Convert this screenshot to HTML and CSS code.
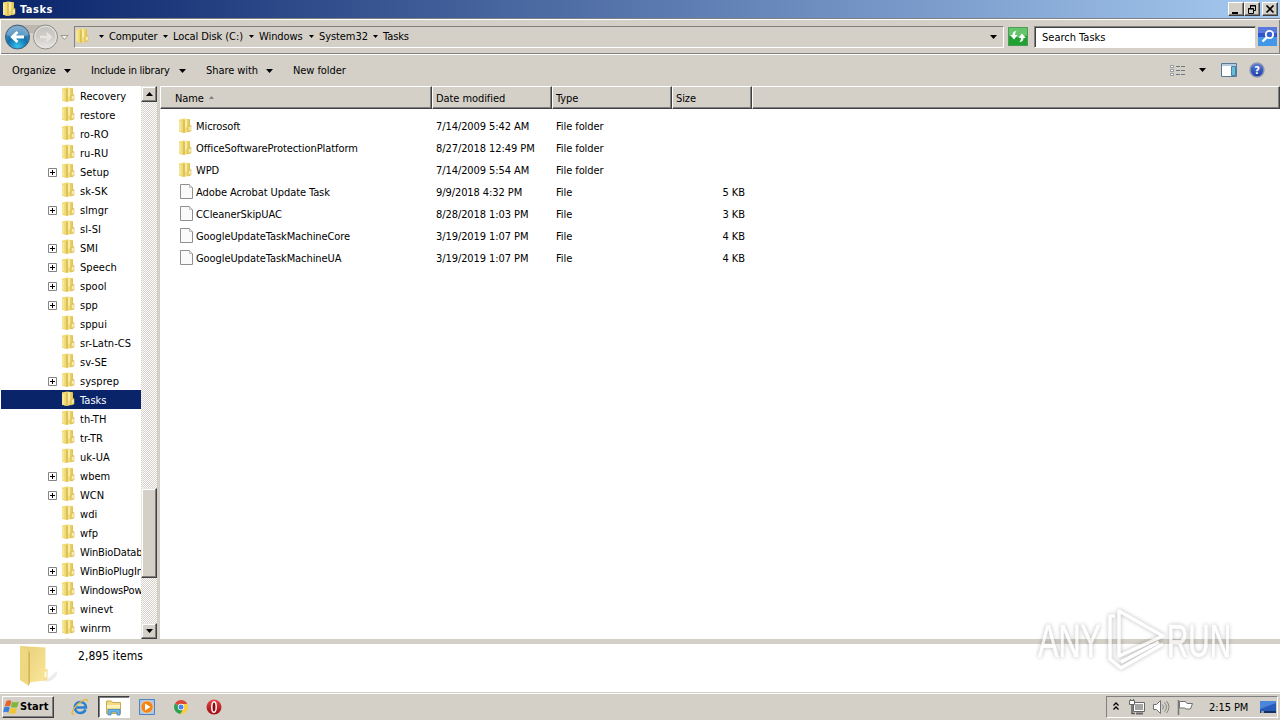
FILE: index.html
```html
<!DOCTYPE html>
<html lang="en">
<head>
    <meta charset="UTF-8">
    <meta name="viewport" content="width=device-width, initial-scale=1.0">
    <title>Tasks</title>
    <link rel="stylesheet" href="styles.css">
</head>
<body>
    <!-- Shared icons -->
    <svg class="icon-defs" width="0" height="0">
        <defs>
            <linearGradient id="gold" x1="0" x2="1" y1="0" y2="0">
                <stop offset="0" stop-color="#fbeea0"/>
                <stop offset="0.45" stop-color="#e9cf5c"/>
                <stop offset="0.55" stop-color="#f6e388"/>
                <stop offset="1" stop-color="#dfc04a"/>
            </linearGradient>
            <linearGradient id="gold-big" x1="0" x2="1" y1="0" y2="1">
                <stop offset="0" stop-color="#e6cd78"/>
                <stop offset="1" stop-color="#fbe79a"/>
            </linearGradient>
            <radialGradient id="blue-ball" cx="0.5" cy="0.9" r="0.85">
                <stop offset="0" stop-color="#35c3ee"/>
                <stop offset="0.5" stop-color="#1272ad"/>
                <stop offset="1" stop-color="#5f93be"/>
            </radialGradient>
            <linearGradient id="gray-ball" x1="0" x2="0" y1="0" y2="1">
                <stop offset="0" stop-color="#c3c1be"/>
                <stop offset="0.5" stop-color="#cfccc8"/>
                <stop offset="1" stop-color="#e9e7e4"/>
            </linearGradient>
            <linearGradient id="help-ball" x1="0" x2="0" y1="0" y2="1">
                <stop offset="0" stop-color="#5c7fd6"/>
                <stop offset="1" stop-color="#1a3aa6"/>
            </linearGradient>
            <linearGradient id="red-ball" x1="0" x2="0" y1="0" y2="1">
                <stop offset="0" stop-color="#e84848"/>
                <stop offset="1" stop-color="#a00810"/>
            </linearGradient>
        </defs>
        <symbol id="folder" viewBox="0 0 16 16">
            <path d="M1 1.500l5-1 6 .8v12.200l-6 1.400-5-1.200z" fill="url(#gold)"/>
            <path d="M1 1.500l4.500.7v12.500l-4.500-1z" fill="#f1db78"/>
            <path d="M2 3v10" stroke="#fbf2b8"/>
            <path d="M6 2v12.500" stroke="#c9aa45"/>
            <path d="M8 1.500v8" stroke="#fff6c0" stroke-width="1.200"/>
            <path d="M10 8.500l3-1v5.500l-3 1z" fill="#efdb7c" stroke="#d3b64c" stroke-width=".6"/>
            <path d="M12 9v3" stroke="#fffbe5" stroke-width="1"/>
        </symbol>
        <symbol id="file" viewBox="0 0 16 16">
            <path d="M2.500.5h9l3 3v11h-12z" fill="#fafafa" stroke="#8f8f8f"/>
            <path d="M11.500.5v3h3" fill="#e4e4e4" stroke="#b5b5b5" stroke-width=".8"/>
        </symbol>
        <symbol id="plus" viewBox="0 0 9 9">
            <path d="M.5.5h8v8h-8z" fill="#fff" stroke="#848484"/>
            <path d="M2 4.500h5M4.500 2v5" stroke="#000"/>
        </symbol>
        <symbol id="down" viewBox="0 0 7 4">
            <path d="M0 0h7L3.500 4z" fill="#000"/>
        </symbol>
    </svg>

    <header class="title-bar">
        <svg class="title-icon"><use href="#folder"/></svg>
        <span class="title">Tasks</span>
        <div class="window-buttons">
            <button class="window-button"><svg width="10" height="9"><path d="M1 7h6v2H1z"/></svg></button>
            <button class="window-button"><svg width="10" height="9"><path d="M3.500 3V.5h5v5h-2M3 1h6" fill="none" stroke="#000"/><path d="M1.500 3.500h5v5h-5zM1 4h6" fill="#d4d0c8" stroke="#000"/></svg></button>
            <button class="window-button close"><svg width="10" height="9"><path d="M1.500.5l7 7M8.500.5l-7 7" stroke="#000" stroke-width="1.600"/></svg></button>
        </div>
    </header>

    <nav class="address-row">
        <svg class="travel" width="72" height="30">
            <path d="M14 3h34v8H14z" fill="#bcb8b0"/>
            <circle cx="17.500" cy="15" r="12" fill="url(#blue-ball)" stroke="#465f78"/>
            <path d="M6.500 13c1-6 6-9 11-9s10 3 11 9c-7 2.500-15 2.500-22 0z" fill="#fff" opacity=".25"/>
            <path d="M24 15H13M17.500 10l-5.200 5 5.200 5" fill="none" stroke="#fff" stroke-width="2.800"/>
            <circle cx="45.500" cy="15" r="12" fill="url(#gray-ball)" stroke="#908e8b"/>
            <circle cx="45.500" cy="15" r="10.700" fill="none" stroke="#e9e7e3"/>
            <path d="M40 15h10M46.500 11l4.200 4-4.200 4" fill="none" stroke="#e8e5e1" stroke-width="2.400"/>
            <path d="M61 13.500h7l-3.500 4z" fill="#f5f3ef" stroke="#8a8880" stroke-width=".8"/>
        </svg>
        <div class="address">
            <svg class="icon"><use href="#folder"/></svg>
            <ul class="crumbs">
                <li><svg class="arrow"><use href="#down"/></svg><span style="width:47px">Computer</span></li>
                <li><svg class="arrow"><use href="#down"/></svg><span style="width:69px">Local Disk (C:)</span></li>
                <li><svg class="arrow"><use href="#down"/></svg><span style="width:43px">Windows</span></li>
                <li><svg class="arrow"><use href="#down"/></svg><span style="width:47px">System32</span></li>
                <li><svg class="arrow"><use href="#down"/></svg><span>Tasks</span></li>
            </ul>
            <svg class="history"><use href="#down"/></svg>
        </div>
        <button class="refresh"><svg width="20" height="19">
            <path d="M0 0h20v19H0z" fill="#22a032"/>
            <path d="M0 0h20v8c-7 3-14 3-20 0z" fill="#65c56c"/>
            <path d="M.5.5h19v18H.5z" fill="none" stroke="#4d9a55"/>
            <path d="M8.500 4c-2.500 0-4 1.500-4 4H2.200L6 12.500 9.500 8H7c0-1.500.5-2.500 1.500-4zM11.500 15c2.500 0 4-1.500 4-4h2.300L14 6.500 10.500 11H13c0 1.500-.5 2.500-1.500 4z" fill="#fff"/>
        </svg></button>
        <div class="search">Search Tasks</div>
        <button class="search-go"><svg width="19" height="19">
            <path d="M0 0h19v19H0z" fill="#2f55cd"/>
            <path d="M0 10h19v9H0z" fill="#4298e6"/>
            <path d="M0 0h19v6H0z" fill="#5b79da"/>
            <circle cx="11.500" cy="7.500" r="3.700" fill="#3a62cf" stroke="#fff" stroke-width="1.800"/>
            <path d="M8.800 10.300L4.500 14.500" stroke="#fff" stroke-width="2.400"/>
        </svg></button>
    </nav>

    <div class="toolbar">
        <span class="command organize">Organize <svg class="arrow"><use href="#down"/></svg></span>
        <span class="command include">Include in library <svg class="arrow"><use href="#down"/></svg></span>
        <span class="command share">Share with <svg class="arrow"><use href="#down"/></svg></span>
        <span class="command">New folder</span>
        <div class="view-tools">
            <svg width="16" height="13">
                <path d="M.5 1.500h3v2h-3zM.5 5.500h3v2h-3zM.5 9.500h3v2h-3z" fill="#fff" stroke="#7d8792" stroke-width=".8"/>
                <path d="M6 2.500h4M11 2.500h4M6 6.500h4M11 6.500h4M6 10.500h4M11 10.500h4" stroke="#71767e"/>
            </svg>
            <svg class="arrow"><use href="#down"/></svg>
            <svg width="16" height="14">
                <path d="M.5.500h15v13H.5z" fill="#fff" stroke="#56799b"/>
                <path d="M1 1h14v2H1z" fill="#b4cbe0"/>
                <path d="M10.500 3.500h4v9h-4z" fill="#68bddd" stroke="#457fa3"/>
            </svg>
            <svg width="16" height="16">
                <circle cx="8" cy="8" r="7" fill="url(#help-ball)" stroke="#8f98b4" stroke-width="1.400"/>
                <text x="8" y="12" class="help-mark">?</text>
            </svg>
        </div>
    </div>

    <main class="explorer">
        <ul class="tree">
            <li><svg class="icon"><use href="#folder"/></svg>Recovery</li>
            <li><svg class="icon"><use href="#folder"/></svg>restore</li>
            <li><svg class="icon"><use href="#folder"/></svg>ro-RO</li>
            <li><svg class="icon"><use href="#folder"/></svg>ru-RU</li>
            <li class="parent"><svg class="plus"><use href="#plus"/></svg><svg class="icon"><use href="#folder"/></svg>Setup</li>
            <li><svg class="icon"><use href="#folder"/></svg>sk-SK</li>
            <li class="parent"><svg class="plus"><use href="#plus"/></svg><svg class="icon"><use href="#folder"/></svg>slmgr</li>
            <li><svg class="icon"><use href="#folder"/></svg>sl-SI</li>
            <li class="parent"><svg class="plus"><use href="#plus"/></svg><svg class="icon"><use href="#folder"/></svg>SMI</li>
            <li class="parent"><svg class="plus"><use href="#plus"/></svg><svg class="icon"><use href="#folder"/></svg>Speech</li>
            <li class="parent"><svg class="plus"><use href="#plus"/></svg><svg class="icon"><use href="#folder"/></svg>spool</li>
            <li class="parent"><svg class="plus"><use href="#plus"/></svg><svg class="icon"><use href="#folder"/></svg>spp</li>
            <li><svg class="icon"><use href="#folder"/></svg>sppui</li>
            <li><svg class="icon"><use href="#folder"/></svg>sr-Latn-CS</li>
            <li><svg class="icon"><use href="#folder"/></svg>sv-SE</li>
            <li class="parent"><svg class="plus"><use href="#plus"/></svg><svg class="icon"><use href="#folder"/></svg>sysprep</li>
            <li class="selected"><svg class="icon"><use href="#folder"/></svg>Tasks</li>
            <li><svg class="icon"><use href="#folder"/></svg>th-TH</li>
            <li><svg class="icon"><use href="#folder"/></svg>tr-TR</li>
            <li><svg class="icon"><use href="#folder"/></svg>uk-UA</li>
            <li class="parent"><svg class="plus"><use href="#plus"/></svg><svg class="icon"><use href="#folder"/></svg>wbem</li>
            <li class="parent"><svg class="plus"><use href="#plus"/></svg><svg class="icon"><use href="#folder"/></svg>WCN</li>
            <li><svg class="icon"><use href="#folder"/></svg>wdi</li>
            <li><svg class="icon"><use href="#folder"/></svg>wfp</li>
            <li class="long"><svg class="icon"><use href="#folder"/></svg>WinBioDatab</li>
            <li class="parent long"><svg class="plus"><use href="#plus"/></svg><svg class="icon"><use href="#folder"/></svg>WinBioPlugIn</li>
            <li class="parent long"><svg class="plus"><use href="#plus"/></svg><svg class="icon"><use href="#folder"/></svg>WindowsPow</li>
            <li class="parent"><svg class="plus"><use href="#plus"/></svg><svg class="icon"><use href="#folder"/></svg>winevt</li>
            <li class="parent"><svg class="plus"><use href="#plus"/></svg><svg class="icon"><use href="#folder"/></svg>winrm</li>
            <li><svg class="icon"><use href="#folder"/></svg></li>
        </ul>
        <div class="scrollbar">
            <button class="scroll-button"><svg width="7" height="4"><path d="M0 4h7L3.500 0z"/></svg></button>
            <div class="scroll-track"><div class="scroll-thumb"></div></div>
            <button class="scroll-button"><svg width="7" height="4"><path d="M0 0h7L3.500 4z"/></svg></button>
        </div>
        <section class="files">
            <div class="file-row file-head">
                <span class="name">Name <svg width="5" height="3"><path d="M0 3h5L2.500 0z" fill="#808080"/></svg></span>
                <span>Date modified</span>
                <span>Type</span>
                <span>Size</span>
                <span></span>
            </div>
            <div class="file-list">
                <div class="file-row"><span class="name"><svg class="icon"><use href="#folder"/></svg>Microsoft</span><span>7/14/2009 5:42 AM</span><span>File folder</span><span class="size"></span></div>
                <div class="file-row"><span class="name"><svg class="icon"><use href="#folder"/></svg>OfficeSoftwareProtectionPlatform</span><span>8/27/2018 12:49 PM</span><span>File folder</span><span class="size"></span></div>
                <div class="file-row"><span class="name"><svg class="icon"><use href="#folder"/></svg>WPD</span><span>7/14/2009 5:54 AM</span><span>File folder</span><span class="size"></span></div>
                <div class="file-row"><span class="name"><svg class="icon"><use href="#file"/></svg>Adobe Acrobat Update Task</span><span>9/9/2018 4:32 PM</span><span>File</span><span class="size">5 KB</span></div>
                <div class="file-row"><span class="name"><svg class="icon"><use href="#file"/></svg>CCleanerSkipUAC</span><span>8/28/2018 1:03 PM</span><span>File</span><span class="size">3 KB</span></div>
                <div class="file-row"><span class="name"><svg class="icon"><use href="#file"/></svg>GoogleUpdateTaskMachineCore</span><span>3/19/2019 1:07 PM</span><span>File</span><span class="size">4 KB</span></div>
                <div class="file-row"><span class="name"><svg class="icon"><use href="#file"/></svg>GoogleUpdateTaskMachineUA</span><span>3/19/2019 1:07 PM</span><span>File</span><span class="size">4 KB</span></div>
            </div>
        </section>
    </main>

    <footer class="details">
        <svg width="42" height="44">
            <path d="M28 36l11-9c1 5-4 10-11 11z" fill="#d8dbde" opacity=".5"/>
            <path d="M2 2l25.500 1.500v33l-17 2z" fill="url(#gold-big)"/>
            <path d="M2 1.500l9 5V42L2 36z" fill="#eed781"/>
            <path d="M10.500 6.500V42l1.300-3V9z" fill="#cda94a"/>
            <path d="M26 27l3.500-2.500V35L26 37.500z" fill="#f2dc8a"/>
            <path d="M27.500 27.500v6" stroke="#fffdf0" stroke-width="2"/>
        </svg>
        <span>2,895 items</span>
    </footer>

    <div class="taskbar">
        <button class="start">
            <svg width="17" height="16">
                <path d="M3.500 2c2-1 3.500-.8 5 .2L7 7.600c-1.500-1-3.500-1-5.500-.2z" fill="#e8622c"/>
                <path d="M9.200 2.700c2 .9 4 .9 6.600-.2l-1.500 5.400c-2 1-4.500.9-6.500 0z" fill="#7db83c"/>
                <path d="M1.300 8.200c2-.8 4-.8 5.500.2l-1.500 5.300c-1.500-1-3.300-1.200-5.300-.2z" fill="#3c7fd6"/>
                <path d="M7.600 8.800c2 .9 4 .9 6.500-.1l-1.500 5.300c-2 1.200-4.600 1-6.500 0z" fill="#f4c430"/>
            </svg>
            Start
        </button>
        <div class="launchers">
            <div class="launcher">
                <svg width="18" height="18">
                    <path d="M14.500 11.500c-1 2.300-2.900 3.500-5.200 3.500a5.500 5.500 0 1 1 5.600-5.500H5" fill="none" stroke="#2a7fd0" stroke-width="2.700"/>
                    <path d="M3.500 15.500C-1 18 1 12 6 7s11-7.500 10.500-3.500" fill="none" stroke="#e0bb38" stroke-width="1.300"/>
                </svg>
            </div>
            <div class="launcher active">
                <svg width="18" height="17">
                    <path d="M1.500 2h5l1 1.500h8v11h-14z" fill="#f1da83" stroke="#c9a94f"/>
                    <path d="M2 6h13v3H2z" fill="#fff3b8"/>
                    <path d="M3 16v-5.500h12V16h-3v-3H6v3z" fill="#6bb5e8" stroke="#3e87c4" stroke-width=".8"/>
                </svg>
            </div>
            <div class="launcher">
                <svg width="16" height="16">
                    <path d="M.5.500h15v15H.5z" fill="#a9c9ea" stroke="#4985c5"/>
                    <circle cx="8" cy="8" r="6.200" fill="#f38415" stroke="#fae3bd" stroke-width=".7"/>
                    <path d="M6 4.500v7L11.500 8z" fill="#fff"/>
                </svg>
            </div>
            <div class="launcher">
                <svg width="14" height="14">
                    <path d="M7 7L1 3.500A7 7 0 0 1 13.100 3.600z" fill="#de4537"/>
                    <path d="M7 7h-.2L1 3.500A7 7 0 0 0 6.500 14L9.500 8.500z" fill="#2fa14f"/>
                    <path d="M7 4h6.300A7 7 0 0 1 6.500 14L9.700 8.500z" fill="#fbcd3a"/>
                    <circle cx="7" cy="7" r="3.200" fill="#fff"/>
                    <circle cx="7" cy="7" r="2.500" fill="#4a83e8"/>
                </svg>
            </div>
            <div class="launcher">
                <svg width="16" height="16">
                    <circle cx="8" cy="8" r="7.500" fill="url(#red-ball)"/>
                    <ellipse cx="8" cy="8" rx="2.200" ry="5.300" fill="#8e0b10" stroke="#fff" stroke-width="1.500"/>
                </svg>
            </div>
        </div>
        <div class="tray">
            <svg class="chevrons" width="6" height="8"><path d="M.5 3.500L3 1l2.500 2.500M.5 7.500L3 5l2.500 2.500" fill="none" stroke="#000" stroke-width="1.300"/></svg>
            <svg class="network" width="17" height="16">
                <path d="M4.500 3.500h11v9h-11z" fill="#fff" stroke="#666"/>
                <path d="M6 5h8v6H6z" fill="#a4a4a4"/>
                <path d="M7 14.500h7" stroke="#666" stroke-width="2"/>
                <path d="M.5 1.500h5v4h-5zM1.500 0v2M4.500 0v2" fill="#fff" stroke="#666"/>
                <path d="M3 6v8.500h3" fill="none" stroke="#555" stroke-width="1.400"/>
            </svg>
            <svg class="volume" width="17" height="14">
                <path d="M.5 4.500h3l4-4v13l-4-4h-3z" fill="#fff" stroke="#707070"/>
                <path d="M9.500 4.500q2 2.500 0 5M11.500 2.500q4 4.500 0 9M13.500 1q5 6 0 12" fill="none" stroke="#858585"/>
            </svg>
            <svg class="flag" width="17" height="15">
                <path d="M1.500 0v15" stroke="#777" stroke-width="1.500"/>
                <path d="M2.500 1.500h6l1.500 2h5.500l-2 5.500H9L7.500 8h-5z" fill="#fff" stroke="#707070"/>
            </svg>
            <span class="clock">2:15 PM</span>
            <svg width="16" height="13">
                <path d="M0 0h16v10H0z" fill="#285cba"/>
                <path d="M0 0h16v2L0 8z" fill="#4c86db"/>
                <path d="M0 10h16v2H0z" fill="#16305f"/>
                <path d="M1 11h3" stroke="#fff"/>
            </svg>
        </div>
    </div>

    <!-- Watermark over the window -->
    <svg class="watermark" width="204" height="76">
        <text x="7" y="55" textLength="63" lengthAdjust="spacingAndGlyphs">ANY</text>
        <g class="watermark-play">
            <path d="M88 9v45l44-20z"/>
            <path d="M84 14h-5v43l11 9 42-24"/>
            <path d="M90 60l38-20"/>
        </g>
        <text x="136" y="55" textLength="64" lengthAdjust="spacingAndGlyphs">RUN</text>
    </svg>
</body>
</html>
```
FILE: styles.css
```css
* {
    box-sizing: border-box;
}

body {
    margin: 0;
    width: 1280px;
    height: 720px;
    overflow: hidden;
    display: flex;
    flex-direction: column;
    background: #d4d0c8;
    color: #000;
    font-family: "DejaVu Sans Condensed", "DejaVu Sans", sans-serif;
    font-stretch: condensed;
    font-size: 11px;
    letter-spacing: -0.08px;
    line-height: 14px;
    white-space: nowrap;
}

ul {
    list-style: none;
    margin: 0;
    padding: 0;
}

button {
    padding: 0;
    border: none;
    font: inherit;
    color: inherit;
    background: #d4d0c8;
}

svg {
    display: block;
    flex: none;
}

.icon-defs {
    position: absolute;
}

.icon {
    width: 16px;
    height: 16px;
}

.arrow {
    width: 7px;
    height: 4px;
}

/* Title bar */
.title-bar {
    height: 18px;
    display: flex;
    align-items: center;
    padding: 0 2px 0 2px;
    background: linear-gradient(to right, #0a246a, #a6caf0);
    color: #fff;
}

.title-icon {
    width: 16px;
    height: 16px;
}

.title {
    margin-left: 2px;
    padding-top: 1px;
    flex: 1;
    font-weight: bold;
    letter-spacing: 0.5px;
}

.window-buttons {
    display: flex;
}

.window-button {
    width: 16px;
    height: 14px;
    display: flex;
    align-items: center;
    justify-content: center;
    border: 1px solid;
    border-color: #fff #404040 #404040 #fff;
    box-shadow: inset -1px -1px #808080;
}

.close {
    margin-left: 2px;
}

/* Address row */
.address-row {
    height: 37px;
    display: flex;
    align-items: center;
    padding: 0 2px 0 0;
    border-top: 1px solid #808080;
    border-bottom: 1px solid #fff;
    box-shadow: inset 1px 1px #fff, inset -1px -1px #808080;
}

.address {
    width: 930px;
    height: 22px;
    margin-left: 2px;
    display: flex;
    align-items: center;
    border: 1px solid;
    border-color: #808080 #fff #fff #808080;
}

.address .icon {
    margin-top: -2px;
}

.crumbs {
    display: flex;
    flex: 1;
    margin-left: 8px;
}

.crumbs li {
    display: flex;
    align-items: center;
    margin-right: 7px;
}

.crumbs .arrow {
    width: 5px;
    height: 3px;
    margin-right: 5px;
}

.history {
    width: 7px;
    height: 4px;
    margin-right: 6px;
}

.refresh {
    margin-left: 4px;
}

.search {
    width: 222px;
    height: 22px;
    margin: 0 2px 0 6px;
    padding: 4px 7px;
    background: #fff;
    border: 1px solid;
    border-color: #808080 #d4d0c8 #fff #808080;
    box-shadow: inset 1px 1px #404040;
    letter-spacing: 0;
}

/* Command bar */
.toolbar {
    height: 31px;
    display: flex;
    align-items: center;
    padding: 0 15px 0 12px;
}

.command {
    display: flex;
    align-items: center;
    justify-content: space-between;
}

.organize {
    width: 59px;
    margin-right: 20px;
}

.include {
    width: 95px;
    margin-right: 20px;
    letter-spacing: -0.25px;
}

.share {
    width: 67px;
    margin-right: 20px;
}

.view-tools {
    margin: -1px 0 0 auto;
    display: flex;
    align-items: center;
}

.view-tools .arrow {
    margin: 0 15px 0 13px;
}

.view-tools svg:last-child {
    margin-left: 12px;
}

.help-mark {
    fill: #fff;
    font-weight: bold;
    font-size: 11px;
    text-anchor: middle;
}

/* Tree and file list */
.explorer {
    height: 553px;
    display: flex;
    overflow: hidden;
}

.tree {
    width: 141px;
    padding-left: 1px;
    background: #fff;
    overflow: hidden;
}

.tree li {
    height: 19px;
    display: flex;
    align-items: center;
    padding: 2px 0 0 60px;
    letter-spacing: 0.05px;
}

.tree .parent {
    padding-left: 47px;
}

.tree .long {
    letter-spacing: -0.15px;
}

.tree .icon {
    margin: -3px 3px 0 0;
}

.plus {
    width: 9px;
    height: 9px;
    margin: -1px 4px 0 0;
}

.tree .selected {
    background: #0a246a;
    color: #fff;
}

.scrollbar {
    width: 16px;
    display: flex;
    flex-direction: column;
}

.scroll-button {
    height: 16px;
    display: flex;
    align-items: center;
    justify-content: center;
}

.scroll-button,
.scroll-thumb {
    border: 1px solid;
    border-color: #e8e6e0 #404040 #404040 #e8e6e0;
    box-shadow: inset -1px -1px #808080, inset 1px 1px #fff;
    background: #d4d0c8;
}

.scroll-track {
    flex: 1;
    padding-top: 386px;
    background: repeating-conic-gradient(#fff 0 25%, #d4d0c8 0 50%) 0 0 / 2px 2px;
}

.scroll-thumb {
    height: 90px;
}

.files {
    flex: 1;
    margin-left: 3px;
    background: #fff;
}

.file-row {
    height: 22px;
    display: grid;
    grid-template-columns: 272px 120px 120px 80px 1fr;
    align-items: center;
}

.file-row span {
    padding-left: 4px;
}

.file-row .name {
    display: flex;
    align-items: center;
    padding-left: 18px;
}

.file-row .icon {
    margin: -3px 2px 0 0;
}

.file-row .size {
    padding-right: 7px;
    text-align: right;
}

.file-head {
    height: 23px;
    background: #d4d0c8;
}

.file-head span {
    height: 23px;
    padding: 5px 0 0 3px;
    border: 1px solid;
    border-color: #fff #404040 #404040 #fff;
    box-shadow: inset -1px -1px #808080;
}

.file-head .name {
    padding: 2px 0 0 14px;
    gap: 5px;
}

.file-head svg {
    margin-top: -3px;
}

.file-list {
    padding-top: 7px;
}

/* Details pane */
.details {
    height: 53px;
    display: flex;
    padding-left: 18px;
    background: #fff;
    border-top: 5px solid #d4d0c8;
    font-size: 12px;
    letter-spacing: 0.05px;
}

.details span {
    margin: 5px 0 0 18px;
}

/* Taskbar */
.taskbar {
    height: 28px;
    display: flex;
    align-items: center;
    padding: 1px 2px 0;
    border-top: 1px solid #d4d0c8;
    box-shadow: inset 0 1px #fff;
}

.start {
    width: 52px;
    height: 22px;
    display: flex;
    align-items: center;
    font-weight: bold;
    letter-spacing: 0.1px;
    border: 1px solid;
    border-color: #fff #404040 #404040 #fff;
    box-shadow: inset -1px -1px #808080;
}

.launchers {
    flex: 1;
    display: flex;
    margin-left: 10px;
    gap: 1.5px;
}

.launcher {
    width: 32px;
    height: 22px;
    display: flex;
    align-items: center;
    justify-content: center;
}

.active {
    background: #fff;
    border: 1px solid;
    border-color: #404040 #fff #fff #404040;
    box-shadow: inset 1px 1px #808080;
}

.tray {
    width: 172px;
    height: 22px;
    display: flex;
    align-items: center;
    padding-left: 6px;
    border: 1px solid;
    border-color: #808080 #fff #fff #808080;
}

.chevrons {
    margin-top: -3px;
}

.network {
    margin-left: 10px;
}

.volume,
.flag {
    margin-left: 7px;
}

.clock {
    width: 40px;
    margin: 1px 11px 0 15px;
}

/* Watermark */
.watermark {
    position: absolute;
    left: 1031px;
    top: 602px;
    fill: #fff;
    stroke: #fff;
    stroke-width: 0.6px;
    font: 47px "Liberation Sans", sans-serif;
    letter-spacing: 0;
    opacity: 0.7;
    filter: drop-shadow(0 0 2px rgba(0, 0, 0, 0.4));
}

.watermark-play {
    fill: none;
    stroke-width: 3.5px;
    stroke-linejoin: round;
}
```
